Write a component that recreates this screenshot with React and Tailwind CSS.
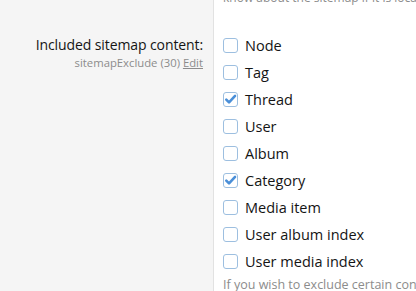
import { useState } from "react";

const ITEMS = [
  { label: "Node", checked: false },
  { label: "Tag", checked: false },
  { label: "Thread", checked: true },
  { label: "User", checked: false },
  { label: "Album", checked: false },
  { label: "Category", checked: true },
  { label: "Media item", checked: false },
  { label: "User album index", checked: false },
  { label: "User media index", checked: false },
];

function Box({ checked, onToggle }) {
  return (
    <button
      type="button"
      onClick={onToggle}
      className="w-[15px] h-[15px] shrink-0 rounded-[3px] border-[1.5px] border-[#9dbfe0] bg-white flex items-center justify-center"
    >
      {checked && (
        <svg viewBox="0 0 16 16" className="w-[15px] h-[15px]">
          <path d="M2.8 8.2 L6.2 11.6 L13.6 3.6" fill="none" stroke="#4a8fd8" strokeWidth="3.2" strokeLinecap="round" strokeLinejoin="round" />
        </svg>
      )}
    </button>
  );
}

export default function App() {
  const [items, setItems] = useState(ITEMS);

  const toggle = (i) => {
    setItems(items.map((it, j) => (j === i ? { ...it, checked: !it.checked } : it)));
  };

  return (
    <div
      className="h-[291px] w-[416px] overflow-hidden flex bg-white text-[#141414]"
      style={{ fontFamily: '"Open Sans", "Noto Sans", sans-serif' }}
    >
      <div className="w-[214px] shrink-0 bg-[#f5f5f5] border-r border-[#e2e2e2] pr-[10px] text-right pt-[34px]">
        <div className="text-[14px] leading-[22px] tracking-[-0.1px]">Included sitemap content:</div>
        <div className="text-[11.3px] leading-[14px] text-[#8c8c8c]">
          sitemapExclude (30) <span className="underline">Edit</span>
        </div>
      </div>

      <div className="flex-1 pl-[9px] flex flex-col">
        <div className="-mt-[10px] text-[12px] leading-[16px] text-[#8c8c8c] whitespace-nowrap">
          know about the sitemap if it is located elsewhere.
        </div>
        <div className="mt-[26px] flex flex-col">
          {items.map((it, i) => (
            <label key={it.label} className="h-[27px] flex items-center gap-[7px] whitespace-nowrap">
              <Box checked={it.checked} onToggle={() => toggle(i)} />
              <span className="text-[14.5px]">{it.label}</span>
            </label>
          ))}
        </div>
        <div className="mt-[2px] text-[12.5px] leading-[16px] text-[#8c8c8c] whitespace-nowrap">
          If you wish to exclude certain content from the sitemap
        </div>
      </div>
    </div>
  );
}
